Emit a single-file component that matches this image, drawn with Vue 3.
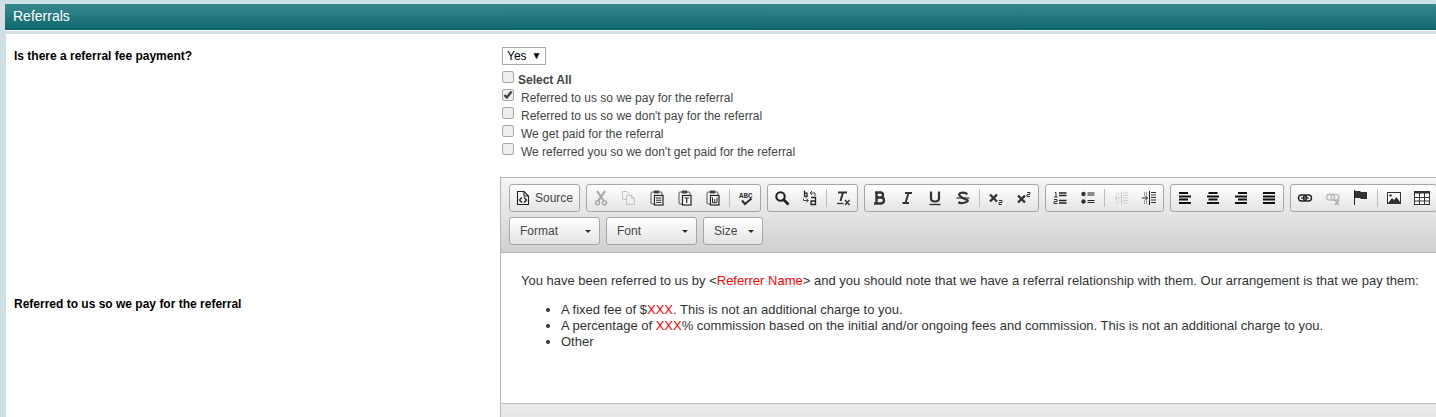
<script setup>
</script>

<template>
  <div class="page">
    <div class="head">Referrals</div>
    <div class="sep"></div>
    <div class="body">
      <div class="row first">
        <div class="label">Is there a referral fee payment?</div>
        <div class="ctrl">
          <div class="select"><span>Yes</span><span class="arr">▼</span></div>
          <div class="opts">
            <label class="opt all"><span class="cb"></span><b>Select All</b></label>
            <label class="opt"><span class="cb checked">
              <svg width="12" height="12" viewBox="0 0 12 12"><path d="M2.5 6L4.8 8.5L9.5 2.5" fill="none" stroke="#444" stroke-width="2.4"/></svg>
            </span><span>Referred to us so we pay for the referral</span></label>
            <label class="opt"><span class="cb"></span><span>Referred to us so we don't pay for the referral</span></label>
            <label class="opt"><span class="cb"></span><span>We get paid for the referral</span></label>
            <label class="opt"><span class="cb"></span><span>We referred you so we don't get paid for the referral</span></label>
          </div>
        </div>
      </div>
      <div class="row second">
        <div class="label">Referred to us so we pay for the referral</div>
        <div class="editor">
          <div class="toolbar">
            <div class="tline">
              <div class="grp">
                <div class="btn source">
                  <svg width="14" height="16" viewBox="0 0 14 16"><path d="M1.5 1.5H8L12.5 6V14.5H1.5Z M8 1.5V6H12.5" fill="none" stroke="#222" stroke-width="1.1"/><path d="M6 7.5L3.5 10L6 12.5M8 7.5L10.5 10L8 12.5" fill="none" stroke="#222" stroke-width="1.3"/></svg>
                  <span>Source</span>
                </div>
              </div>
              <div class="grp">
                <div class="btn ic"><svg width="16" height="16" viewBox="0 0 16 16"><path d="M4 1L10.5 10.5M12 1L5.5 10.5" stroke="#a8a8a8" stroke-width="2.2" fill="none"/><circle cx="4.5" cy="12.8" r="2" fill="none" stroke="#a8a8a8" stroke-width="1.5"/><circle cx="11.5" cy="12.8" r="2" fill="none" stroke="#a8a8a8" stroke-width="1.5"/></svg></div>
                <div class="btn ic"><svg width="16" height="16" viewBox="0 0 16 16"><path d="M5 9.5H1.5V1.5H6L8 3.5V5" fill="none" stroke="#c4c4c4"/><path d="M5.5 5.5H10.5L13.5 8.5V14.5H5.5ZM10.5 5.5V8.5H13.5" fill="none" stroke="#c4c4c4"/></svg></div>
                <div class="btn ic"><svg width="16" height="16" viewBox="0 0 16 16"><path d="M4.5 2H3Q2 2 2 3V13Q2 14 3 14H5M10.5 2H12Q13 2 13 3V5" fill="none" stroke="#555"/><rect x="4.5" y="0.5" width="6" height="3" rx="1.2" fill="#444"/><rect x="5.5" y="5.5" width="8.5" height="9.5" fill="#fff" stroke="#222" stroke-width="1.2"/><path d="M7 8H12.5M7 10.2H12.5M7 12.4H12.5" stroke="#222"/></svg></div>
                <div class="btn ic"><svg width="16" height="16" viewBox="0 0 16 16"><path d="M4.5 2H3Q2 2 2 3V13Q2 14 3 14H5M10.5 2H12Q13 2 13 3V5" fill="none" stroke="#555"/><rect x="4.5" y="0.5" width="6" height="3" rx="1.2" fill="#444"/><rect x="5.5" y="5.5" width="8.5" height="9.5" fill="#fff" stroke="#222" stroke-width="1.2"/><path d="M7.5 8H12M9.75 8V13" stroke="#222" stroke-width="1.2"/></svg></div>
                <div class="btn ic"><svg width="16" height="16" viewBox="0 0 16 16"><path d="M4.5 2H3Q2 2 2 3V13Q2 14 3 14H5M10.5 2H12Q13 2 13 3V5" fill="none" stroke="#555"/><rect x="4.5" y="0.5" width="6" height="3" rx="1.2" fill="#444"/><rect x="5.5" y="5.5" width="8.5" height="9.5" fill="#fff" stroke="#222" stroke-width="1.2"/><path d="M7.5 7.5V12.8H12V7.5M9.75 9V12.8" fill="none" stroke="#222"/></svg></div>
                <i class="div"></i>
                <div class="btn ic"><svg class="spell" width="16" height="16" viewBox="0 0 16 16"><text x="1" y="8" class="abc">ABC</text><path d="M4 10.5L7 14L13.5 8.5" fill="none" stroke="#333" stroke-width="2.2"/></svg></div>
              </div>
              <div class="grp">
                <div class="btn ic"><svg width="16" height="16" viewBox="0 0 16 16"><circle cx="6.5" cy="6.5" r="4.2" fill="none" stroke="#222" stroke-width="2.1"/><path d="M9.5 9.5L14.5 14.5" stroke="#222" stroke-width="2.8"/></svg></div>
                <div class="btn ic"><svg width="16" height="16" viewBox="0 0 16 16"><path d="M2.5 0.5V6.5M2.5 3.2H5V6.5H2.5" fill="none" stroke="#222" stroke-width="1.3"/><path d="M10 1L8 3L10 5M8.5 3H13V6" fill="none" stroke="#444"/><path d="M1.5 8.5V10.5H6M4.5 8.5L6.5 10.5L4.5 12.5" fill="none" stroke="#444"/><path d="M9 7.5H13.5V14.5H9V11H13.5" fill="none" stroke="#222" stroke-width="1.3"/></svg></div>
                <i class="div"></i>
                <div class="btn ic"><svg width="16" height="16" viewBox="0 0 16 16"><path d="M3 2.5H12M8 2.5L5.5 11" stroke="#333" stroke-width="2" fill="none"/><path d="M2 13.5H8.5" stroke="#333" stroke-width="1.3"/><path d="M10 10L14.5 15M14.5 10L10 15" stroke="#333" stroke-width="1.4"/></svg></div>
              </div>
              <div class="grp">
                <div class="btn ic"><svg width="16" height="16" viewBox="0 0 16 16"><path d="M4 2.5H9.5Q12 2.5 12 5T9.5 7.5H5M5 7.5H10Q13 7.5 13 10.2T10 13.5H3M5.5 2.5V13.5" fill="none" stroke="#333" stroke-width="2.4"/></svg></div>
                <div class="btn ic"><svg width="16" height="16" viewBox="0 0 16 16"><path d="M6 3H13M3.5 13H10M9.5 3L6.5 13" stroke="#333" stroke-width="2" fill="none"/></svg></div>
                <div class="btn ic"><svg width="16" height="16" viewBox="0 0 16 16"><path d="M4 1.5V8.5Q4 11.5 8 11.5T12 8.5V1.5" fill="none" stroke="#333" stroke-width="2.2"/><path d="M2.5 14.5H13.5" stroke="#333" stroke-width="1.4"/></svg></div>
                <div class="btn ic"><svg width="16" height="16" viewBox="0 0 16 16"><path d="M12.5 4Q8 2 5.5 3T5 6T11 9.5T10 12.5T3.5 12" fill="none" stroke="#333" stroke-width="2.2"/><path d="M1.5 8H14.5" stroke="#333" stroke-width="1.2"/></svg></div>
                <i class="div"></i>
                <div class="btn ic"><svg width="16" height="16" viewBox="0 0 16 16"><path d="M2 4.5L9 11.5M9 4.5L2 11.5" stroke="#333" stroke-width="2.4"/><path d="M11 10.5H14V12.5H11V14.5H14" fill="none" stroke="#333"/></svg></div>
                <div class="btn ic"><svg width="16" height="16" viewBox="0 0 16 16"><path d="M2 5.5L9 12.5M9 5.5L2 12.5" stroke="#333" stroke-width="2.4"/><path d="M11 2.5H14V4.5H11V6.5H14" fill="none" stroke="#333"/></svg></div>
              </div>
              <div class="grp">
                <div class="btn ic"><svg width="16" height="16" viewBox="0 0 16 16"><path d="M3 2.5H4V7M2 7H5.5M2 9.5H5V11.5H2V13.5H5.5" fill="none" stroke="#333"/><path d="M7 3H14.5M7 5.5H14.5M7 10.5H14.5M7 13H14.5" stroke="#222" stroke-width="1.3"/></svg></div>
                <div class="btn ic"><svg width="16" height="16" viewBox="0 0 16 16"><circle cx="3.5" cy="4" r="2.2" fill="#333"/><circle cx="3.5" cy="11.5" r="2.2" fill="#333"/><path d="M7.5 3H14.5M7.5 5H14.5M7.5 10.5H14.5M7.5 12.5H14.5" stroke="#222" stroke-width="1.2"/></svg></div>
                <i class="div"></i>
                <div class="btn ic"><svg width="16" height="16" viewBox="0 0 16 16"><path d="M8.5 1.5V14.5" stroke="#c4c4c4"/><path d="M10 3H15M10 5.5H15M10 8H15M10 10.5H15M10 13H15" stroke="#ccc"/><path d="M7 8H2M4 6L2 8L4 10" stroke="#ccc" fill="none"/><path d="M3 3H6M3 5H6M3 11H6M3 13H6" stroke="#ccc" stroke-dasharray="1 1"/></svg></div>
                <div class="btn ic"><svg width="16" height="16" viewBox="0 0 16 16"><path d="M8.5 1V15" stroke="#222"/><path d="M10 2.5H15M10 5H15M10 7.5H15M10 10H15M10 12.5H15" stroke="#333"/><path d="M1 8H6.5M4.5 6L6.5 8L4.5 10" stroke="#222" fill="none"/><path d="M3 3H7M3 5H7M3 11H7M3 13H7" stroke="#444" stroke-dasharray="1 1"/></svg></div>
              </div>
              <div class="grp">
                <div class="btn ic"><svg width="16" height="16" viewBox="0 0 16 16"><path d="M2 3H11M2 6.5H14M2 9.5H11M2 13H14" stroke="#111" stroke-width="2"/></svg></div>
                <div class="btn ic"><svg width="16" height="16" viewBox="0 0 16 16"><path d="M3.5 3H12.5M2 6.5H14M3.5 9.5H12.5M2 13H14" stroke="#111" stroke-width="2"/></svg></div>
                <div class="btn ic"><svg width="16" height="16" viewBox="0 0 16 16"><path d="M5 3H14M2 6.5H14M5 9.5H14M2 13H14" stroke="#111" stroke-width="2"/></svg></div>
                <div class="btn ic"><svg width="16" height="16" viewBox="0 0 16 16"><path d="M2 3H14M2 6.5H14M2 9.5H14M2 13H14" stroke="#111" stroke-width="2"/></svg></div>
              </div>
              <div class="grp">
                <div class="btn ic"><svg width="16" height="16" viewBox="0 0 16 16"><rect x="1.5" y="5" width="8" height="6" rx="3" fill="none" stroke="#222" stroke-width="1.4"/><rect x="6.5" y="5" width="8" height="6" rx="3" fill="none" stroke="#222" stroke-width="1.4"/><path d="M4 8H12" stroke="#222" stroke-width="1.2"/></svg></div>
                <div class="btn ic"><svg width="16" height="16" viewBox="0 0 16 16"><rect x="1.5" y="4.5" width="8" height="5.5" rx="2.7" fill="none" stroke="#bbb" stroke-width="1.4"/><rect x="6" y="4.5" width="8" height="5.5" rx="2.7" fill="none" stroke="#bbb" stroke-width="1.4"/><path d="M10 10L14 15M14 10L10 15" stroke="#aaa" stroke-width="1.4"/></svg></div>
                <div class="btn ic"><svg width="16" height="16" viewBox="0 0 16 16"><path d="M1.5 0V15" stroke="#222"/><path d="M2 1H7L8 2H14V9H8L7 8H2Z" fill="#333"/></svg></div>
                <i class="div"></i>
                <div class="btn ic"><svg width="16" height="16" viewBox="0 0 16 16"><rect x="1.5" y="2.5" width="13" height="11" fill="#fff" stroke="#333"/><circle cx="4.5" cy="5.5" r="1.2" fill="#333"/><path d="M2 13L6 8L8 10L10.5 7L14 12V13Z" fill="#333"/></svg></div>
                <div class="btn ic"><svg width="16" height="16" viewBox="0 0 16 16"><rect x="0.5" y="1.5" width="15" height="13" fill="#fff" stroke="#333"/><path d="M0.5 2.5H15.5" stroke="#333" stroke-width="2"/><path d="M0.5 7.5H15.5M0.5 11H15.5M5.5 3V14.5M10.5 3V14.5" stroke="#333"/></svg></div>
              </div>
            </div>
            <div class="tline">
              <div class="combo w91"><span>Format</span><i class="caret"></i></div>
              <div class="combo w91"><span>Font</span><i class="caret"></i></div>
              <div class="combo w60"><span>Size</span><i class="caret"></i></div>
            </div>
          </div>
          <div class="content">
            <p>You have been referred to us by &lt;<span class="red">Referrer Name</span>&gt; and you should note that we have a referral relationship with them. Our arrangement is that we pay them:</p>
            <ul>
              <li>A fixed fee of $<span class="red">XXX</span>. This is not an additional charge to you.</li>
              <li>A percentage of <span class="red">XXX</span>% commission based on the initial and/or ongoing fees and commission. This is not an additional charge to you.</li>
              <li>Other</li>
            </ul>
          </div>
          <div class="bottom"></div>
        </div>
      </div>
    </div>
  </div>
</template>

<style>
html, body { margin: 0; padding: 0; overflow: hidden; background: #cfe0e6; }
</style>

<style scoped>
.page { width: 1436px; height: 417px; overflow: hidden; padding: 4px 0 0 5px; box-sizing: border-box; font-family: "Liberation Sans", Arial, sans-serif; background: #cfe0e6; }
.head { height: 26px; line-height: 25px; padding-left: 8px; color: #fff; font-size: 14px; background: linear-gradient(#3b8a8f, #0c666e); }
.sep { height: 4px; border-top: 1px solid #fff; box-sizing: border-box; }
.body { margin-left: 1px; background: #fff; padding-top: 11px; height: 450px; }
.row { display: flex; }
.label { width: 488px; padding-left: 8px; padding-top: 3px; box-sizing: border-box; flex: none; font-size: 12px; font-weight: bold; color: #000; line-height: 16px; }
.ctrl { padding-left: 8px; }
.select { width: 44px; height: 18px; box-sizing: border-box; border: 1px solid #a9a9a9; font-size: 12px; line-height: 16px; padding-left: 4px; display: flex; gap: 5px; color: #000; background: #fff; margin-top: 2px; }
.arr { font-size: 10px; }
.opts { margin-top: 6px; }
.opt { display: flex; height: 18px; align-items: center; font-size: 12px; color: #444; }
.opt .cb { margin-right: 7px; }
.opt.all .cb { margin-right: 4px; }
.cb { width: 10px; height: 10px; border: 1px solid #a8a8a8; border-radius: 2px; background: #ededed; flex: none; position: relative; top: -3px; display: block; }
.cb svg { display: block; position: absolute; left: -1px; top: -1px; }
.all b { color: #444; }
.second { margin-top: 16px; align-items: flex-start; }
.second .label { align-self: flex-start; margin-top: 116px; }
.editor { margin-left: 6px; flex: none; width: 960px; border: 1px solid #b6b6b6; height: 300px; box-sizing: border-box; }
.toolbar { height: 75px; box-sizing: border-box; padding: 6px 0 0 8px; background: linear-gradient(#f5f5f5, #cfd1cf); border-bottom: 1px solid #b6b6b6; }
.tline { display: flex; gap: 6px; height: 28px; margin-bottom: 5px; white-space: nowrap; }
.grp { display: flex; align-items: center; height: 28px; box-sizing: border-box; border: 1px solid #a6a6a6; border-radius: 3px; background: linear-gradient(#fff, #e4e4e4); flex: none; }
.btn { display: flex; align-items: center; justify-content: center; height: 26px; }
.btn.ic { width: 28px; }
.btn.source { width: 69px; box-sizing: border-box; padding-left: 6px; gap: 5px; justify-content: flex-start; font-size: 12px; color: #474747; }
.div { width: 1px; height: 18px; background: #bcbcbc; flex: none; margin: 0 2px; }
.spell { overflow: visible; }
.abc { font-family: "Liberation Mono", monospace; font-size: 7.5px; font-weight: bold; fill: #333; }
.combo { height: 28px; box-sizing: border-box; border: 1px solid #a6a6a6; border-radius: 3px; background: linear-gradient(#fff, #e4e4e4); display: flex; align-items: center; justify-content: space-between; padding: 0 8px 0 10px; font-size: 12px; color: #484848; flex: none; }
.w91 { width: 91px; }
.w60 { width: 60px; }
.caret { width: 0; height: 0; border-left: 3px solid transparent; border-right: 3px solid transparent; border-top: 3px solid #2f2f2f; }
.content { height: 150px; box-sizing: border-box; padding: 20px 0 0 20px; background: #fff; font-size: 13px; line-height: 16px; color: #333; overflow: hidden; white-space: nowrap; }
.content p { margin: 0 0 13px; }
.content ul { margin: 0; padding-left: 40px; }
.red { color: #f00; }
.bottom { height: 60px; background: linear-gradient(#ebebeb, #d8d8d8); border-top: 1px solid #bfbfbf; }
</style>
